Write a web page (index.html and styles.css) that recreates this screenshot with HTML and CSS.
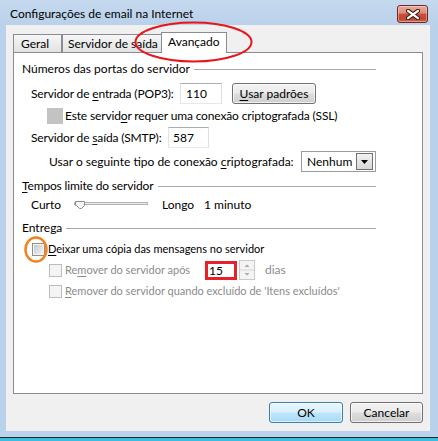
FILE: index.html
```html
<!DOCTYPE html>
<html lang="pt">
<head>
<meta charset="utf-8">
<title>Configurações de email na Internet</title>
<link rel="stylesheet" href="styles.css">
</head>
<body>
<div class="window">
  <div class="titlebar">
    <span class="title">Configurações de email na Internet</span>
    <div class="close">
      <svg width="14" height="11" viewBox="0 0 14 11">
        <path d="M2 1.8 L12 9.2 M12 1.8 L2 9.2" stroke="#3d1a16" stroke-width="4.2" stroke-linecap="round"/>
        <path d="M2 1.8 L12 9.2 M12 1.8 L2 9.2" stroke="#ffffff" stroke-width="2.2" stroke-linecap="round"/>
      </svg>
    </div>
  </div>
  <div class="client">
    <div class="tabs">
      <div class="tab tab-geral">Geral</div>
      <div class="tab tab-saida">Servidor de saída</div>
      <div class="tab tab-active">Avançado</div>
    </div>
    <div class="panel">
      <div class="group-h g1"><span>Números das portas do servidor</span><i class="rule"></i></div>
      <div class="row r-pop3">
        <span class="lbl w-pop3 tight">Servidor de <u>e</u>ntrada (POP3):</span>
        <div class="field f-pop3">110</div>
        <div class="btn btn-usar"><u>U</u>sar padrões</div>
      </div>
      <div class="row r-ssl">
        <span class="chk-ssl"></span>
        <span class="tight">Este servid<u>o</u>r requer uma conexão criptografada (SSL)</span>
      </div>
      <div class="row r-smtp">
        <span class="lbl w-smtp tight">Servidor de <u>s</u>aída (SMTP):</span>
        <div class="field f-smtp">587</div>
      </div>
      <div class="row r-usar">
        <span class="lbl w-usar">Usar o seguinte tipo de conexão <u>c</u>riptografada:</span>
        <div class="select">
          <span>Nenhum</span>
          <span class="dd"><svg width="7" height="4" viewBox="0 0 7 4"><path d="M0 0 H7 L3.5 4 Z" fill="#000"/></svg></span>
        </div>
      </div>

      <div class="group-h g2"><span class="tight"><u>T</u>empos limite do servidor</span><i class="rule"></i></div>
      <div class="row r-slider">
        <span class="lbl w-curto">Curto</span>
        <svg class="slider" width="74" height="16" viewBox="0 0 74 16">
          <rect x="0.5" y="5.5" width="73" height="2" fill="#e7eaea" stroke="#b4b4b4"/>
          <line x1="1" y1="8.5" x2="74" y2="8.5" stroke="#ffffff"/>
          <path d="M1.5 4.5 H10.5 V8.5 L7.5 11.5 H5.5 L2.5 8.5 H1.5 Z" fill="#f6f6f6" stroke="#8a8a8a"/>
        </svg>
        <span class="lbl w-longo">Longo</span>
        <span>1 minuto</span>
      </div>

      <div class="group-h g3"><span>Entrega</span><i class="rule"></i></div>
      <div class="row r-deixar small">
        <span class="chk chk-main"><i></i></span>
        <span><u>D</u>eixar uma cópia das mensagens no servidor</span>
      </div>
      <div class="row r-remover small">
        <span class="chk chk-off"><i></i></span>
        <span class="lbl w-remover off">Re<u>m</u>over do servidor após</span>
        <div class="field f-red">15</div>
        <svg class="spin" width="16" height="20" viewBox="0 0 16 20">
          <rect x="0.5" y="0.5" width="15" height="19" fill="#f4f4f4" stroke="#c9c9c9"/>
          <line x1="1" y1="10" x2="15" y2="10" stroke="#d6d6d6"/>
          <path d="M5.5 7 L8 4.5 L10.5 7 Z" fill="#a8a8a8"/>
          <path d="M5.5 13 L8 15.5 L10.5 13 Z" fill="#a8a8a8"/>
        </svg>
        <span class="off dias">dias</span>
      </div>
      <div class="row r-remover2 small">
        <span class="chk chk-off"><i></i></span>
        <span class="off"><u>R</u>emover do servidor quando excluído de 'Itens excluídos'</span>
      </div>
    </div>
    <div class="buttons">
      <div class="btn btn-ok">OK</div>
      <div class="btn btn-cancel">Cancelar</div>
    </div>
  </div>
  <div class="frame-bottom"></div>
  <div class="edge"></div>
  <div class="below"></div>

  <svg class="annot" width="438" height="441" viewBox="0 0 438 441">
    <ellipse cx="193.5" cy="42" rx="58" ry="19.5" fill="none" stroke="#e8161c" stroke-width="2"/>
    <ellipse cx="36" cy="249.5" rx="10.5" ry="12" fill="none" stroke="#f3821f" stroke-width="2.5"/>
  </svg>
</div>
</body>
</html>
```

FILE: styles.css
```css
* { box-sizing: border-box; }
html, body { margin: 0; padding: 0; }
body {
  font-family: "Lato", "Noto Sans", sans-serif;
  font-size: 12px;
  line-height: 16px;
  color: #000;
  background: #ffffff;
}
u { text-decoration: underline; text-underline-offset: 2px; }
.tight { letter-spacing: -0.15px; }
.small { font-size: 11px; }

.window {
  position: relative;
  width: 438px;
  height: 441px;
  display: flex;
  flex-direction: column;
  background: #b9d1ea;
  overflow: hidden;
}

.titlebar {
  flex: none;
  height: 25px;
  display: flex;
  align-items: flex-start;
  padding: 0 10px 0 10px;
  background: linear-gradient(#c5d9ef, #bad1ea);
}
.title {
  padding-top: 6px;
  font-size: 12px;
  line-height: 16px;
}
.close {
  margin-left: auto;
  margin-top: 5px;
  width: 31px;
  height: 18px;
  border: 1px solid #6b2a22;
  border-radius: 3px;
  background: linear-gradient(#e9a99b 0%, #dd8a78 45%, #c9503a 50%, #c4452f 80%, #d46a4c 100%);
  box-shadow: inset 0 0 0 1px rgba(255,255,255,0.35);
  display: flex;
  align-items: center;
  justify-content: center;
}

.client {
  flex: none;
  height: 406px;
  margin: 0 9px 0 6px;
  background: #f0f0f0;
  padding: 7px 6px 0 7px;
  display: flex;
  flex-direction: column;
  box-shadow: 1px 0 0 #eef4fb;
}

.tabs {
  flex: none;
  height: 20px;
  display: flex;
  align-items: flex-end;
}
.tab {
  height: 18px;
  border: 1px solid #898c95;
  border-bottom: none;
  background: linear-gradient(#f7f7f7, #ececec 50%, #e3e3e3);
  padding-top: 1px;
  line-height: 16px;
  white-space: nowrap;
}
.tab-geral { width: 49px; padding-left: 7px; }
.tab-saida { width: 101px; padding-left: 5px; }
.tab-active {
  position: relative;
  z-index: 1;
  width: 66px;
  height: 21px;
  margin-left: -2px;
  margin-bottom: -1px;
  padding-left: 6px;
  background: #ffffff;
}

.panel {
  flex: none;
  height: 342px;
  border: 1px solid #898c95;
  background: #ffffff;
  padding-left: 8px;
  display: flex;
  flex-direction: column;
}

.group-h {
  width: 354px;
  height: 16px;
  display: flex;
  align-items: center;
}
.group-h .rule {
  flex: 1;
  height: 1px;
  margin-left: 4px;
  margin-top: 1px;
  background: #a9a9a9;
  box-shadow: 0 1px 0 #ffffff;
}
.g1 { margin-top: 8px; }
.g2 { margin-top: 6px; }
.g3 { margin-top: 7px; }

.row {
  display: flex;
  align-items: center;
  white-space: nowrap;
}
.lbl { flex: none; }

.r-pop3 { margin-top: 6px; height: 21px; padding-left: 9px; }
.w-pop3 { width: 149px; }
.r-ssl { margin-top: 4px; height: 16px; padding-left: 25px; }
.r-smtp { margin-top: 3px; height: 21px; padding-left: 9px; }
.w-smtp { width: 137px; }
.r-usar { margin-top: 3px; height: 21px; padding-left: 27px; }
.w-usar { width: 252px; }
.r-slider { margin-top: 3px; height: 16px; padding-left: 9px; }
.w-curto { width: 43px; }
.w-longo { width: 42px; margin-left: 14px; }
.r-deixar { margin-top: 4px; height: 18px; padding-left: 10px; }
.r-remover { margin-top: 2px; height: 20px; padding-left: 27px; }
.w-remover { width: 140px; }
.r-remover2 { margin-top: 3px; height: 16px; padding-left: 27px; }

.field {
  flex: none;
  height: 21px;
  border: 1px solid #abadb3;
  border-color: #abadb3 #dbdfe6 #e3e9ef #e2e3ea;
  background: #ffffff;
  line-height: 19px;
}
.f-pop3 { width: 42px; padding-left: 5px; }
.f-smtp { width: 41px; padding-left: 4px; }
.f-red {
  width: 32px;
  height: 19px;
  border: 3px solid #e8202a;
  padding-left: 1px;
  line-height: 13px;
  font-size: 12px;
}
.spin { flex: none; margin-left: 2px; }
.dias { margin-left: 10px; font-size: 12px; }

.btn {
  flex: none;
  height: 21px;
  border: 1px solid #707070;
  border-radius: 3px;
  background: linear-gradient(#f2f2f2 0%, #ebebeb 48%, #dddddd 52%, #cfcfcf 100%);
  box-shadow: inset 0 0 0 1px rgba(255,255,255,0.7);
  text-align: center;
  line-height: 19px;
  white-space: nowrap;
}
.btn-usar { width: 84px; margin-left: 10px; }

.chk-ssl {
  flex: none;
  width: 16px;
  height: 16px;
  background: #c3c3c3;
  margin-right: 2px;
}

.select {
  flex: none;
  width: 75px;
  height: 21px;
  border: 1px solid #9c9c9c;
  background: #ffffff;
  display: flex;
  align-items: center;
  padding: 0 2px 0 5px;
}
.dd {
  margin-left: auto;
  width: 17px;
  height: 17px;
  border: 1px solid #707070;
  background: linear-gradient(#f2f2f2, #d8d8d8);
  display: flex;
  align-items: center;
  justify-content: center;
}

.slider { flex: none; }

.chk {
  flex: none;
  width: 13px;
  height: 13px;
  border: 1px solid #8e8f8f;
  background: #f4f4f4;
  padding: 1px;
  margin-right: 3px;
}
.chk i {
  display: block;
  width: 9px;
  height: 9px;
  background: linear-gradient(135deg, #c6c9cd, #f2f2f2);
}
.chk-main { margin-right: 3px; }
.chk-off { border-color: #bcbcbc; }
.chk-off i { background: #f4f4f4; }

.off { color: #8b8b8b; }

.buttons {
  flex: none;
  margin-top: 8px;
  display: flex;
  justify-content: flex-end;
  gap: 7px;
}
.btn-ok {
  width: 74px;
  border-color: #3c7fb1;
  background: linear-gradient(#eaf6fd 0%, #d9f0fc 48%, #bee6fd 52%, #a7d9f5 100%);
  box-shadow: inset 0 0 0 1px rgba(255,255,255,0.6);
}
.btn-cancel { width: 73px; }

.frame-bottom { flex: none; height: 6px; }
.edge { flex: none; height: 1px; background: #1c2a30; }
.below { flex: 1; background: #3bbfd8; }

.annot {
  position: absolute;
  left: 0;
  top: 0;
  pointer-events: none;
}
```
